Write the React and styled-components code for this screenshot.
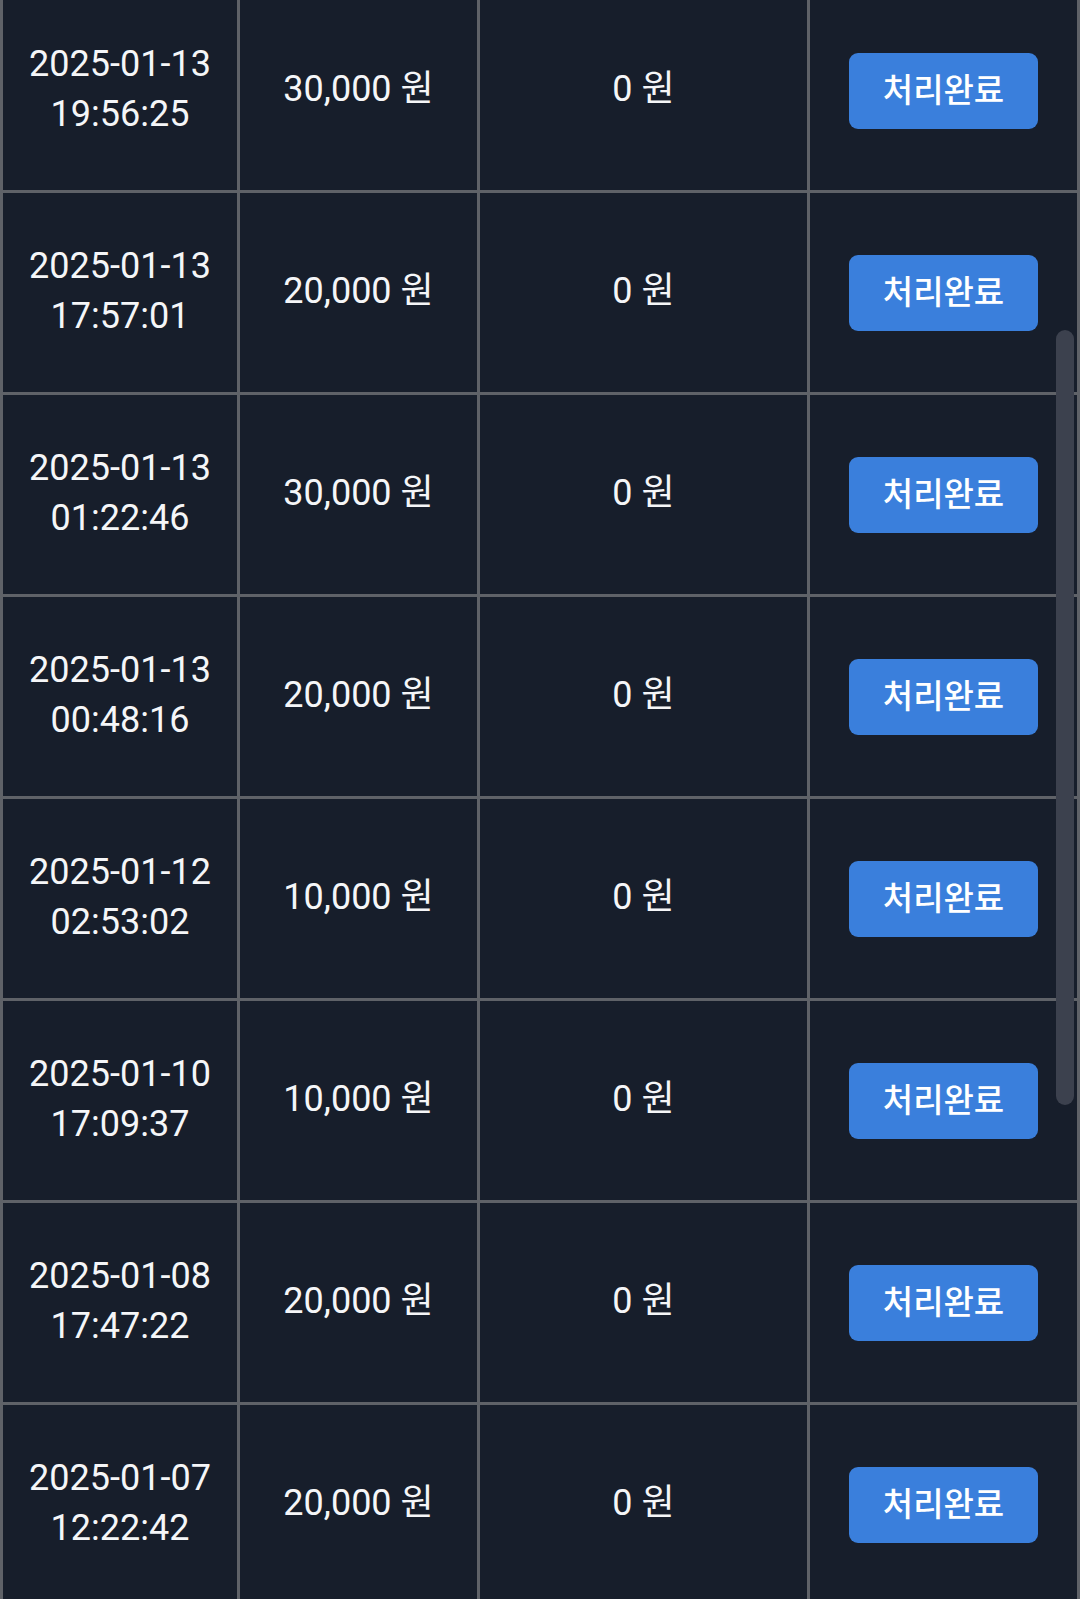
import React from "react";
import styled, { createGlobalStyle } from "styled-components";

const GlobalStyle = createGlobalStyle`
  html, body {
    margin: 0;
    padding: 0;
    background: #171e2b;
    overflow: hidden;
  }
  body {
    font-family: Roboto, "Noto Sans CJK KR", sans-serif;
    color: #f5f6f8;
  }
`;

const Page = styled.div`
  position: relative;
  width: 1080px;
  height: 1599px;
  overflow: hidden;
  background: #171e2b;
`;

const Table = styled.div`
  display: grid;
  grid-template-columns: 237px 240px 330px 273px;
  margin-top: -9px;
`;

const Cell = styled.div`
  box-sizing: border-box;
  height: 202px;
  padding-bottom: 4px;
  border-left: 3px solid #5f6268;
  border-bottom: 3px solid #5f6268;
  border-right: ${(p) => (p.$last ? "3px solid #5f6268" : "none")};
  display: flex;
  align-items: center;
  justify-content: center;
  text-align: center;
  font-size: 36px;
  line-height: 50px;
`;

const DoneButton = styled.button`
  box-sizing: border-box;
  width: 189px;
  height: 76px;
  border: none;
  border-radius: 9px;
  background: #3a7fdc;
  color: #ffffff;
  font-family: Roboto, "Noto Sans CJK KR", sans-serif;
  font-size: 33px;
  font-weight: 500;
  padding: 0 0 5px;
  margin-top: 4px;
  cursor: pointer;
`;

const ScrollThumb = styled.div`
  position: absolute;
  right: 6px;
  top: 330px;
  width: 18px;
  height: 775px;
  border-radius: 9px;
  background: #3c414e;
`;

const rows = [
  ["2025-01-13", "19:56:25", "30,000"],
  ["2025-01-13", "17:57:01", "20,000"],
  ["2025-01-13", "01:22:46", "30,000"],
  ["2025-01-13", "00:48:16", "20,000"],
  ["2025-01-12", "02:53:02", "10,000"],
  ["2025-01-10", "17:09:37", "10,000"],
  ["2025-01-08", "17:47:22", "20,000"],
  ["2025-01-07", "12:22:42", "20,000"],
];

export default function App() {
  return (
    <Page>
      <GlobalStyle />
      <Table>
        {rows.map(([date, time, amount]) => (
          <React.Fragment key={date + time}>
            <Cell>
              {date}
              <br />
              {time}
            </Cell>
            <Cell>{amount} 원</Cell>
            <Cell>0 원</Cell>
            <Cell $last>
              <DoneButton>처리완료</DoneButton>
            </Cell>
          </React.Fragment>
        ))}
      </Table>
      <ScrollThumb />
    </Page>
  );
}
